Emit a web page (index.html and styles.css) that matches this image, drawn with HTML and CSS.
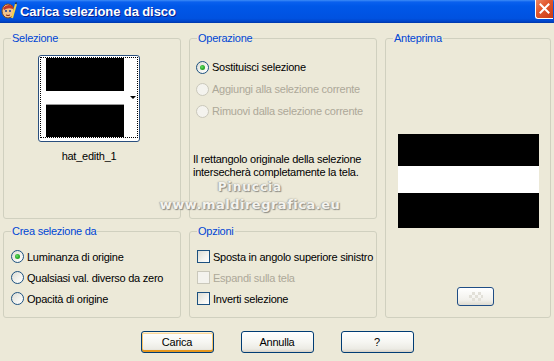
FILE: index.html
```html
<!DOCTYPE html>
<html>
<head>
<meta charset="utf-8">
<link rel="stylesheet" href="styles.css">
</head>
<body>
<div class="window">
  <div class="titlebar">
    <svg class="app-icon" width="16" height="17" viewBox="0 0 16 17">
      <ellipse cx="7" cy="9" rx="6" ry="7" fill="#f3c38a" stroke="#7a4a1c" stroke-width="1"/>
      <path d="M2 6 Q6 1 12 4 L12 7 Q7 5 3 8 Z" fill="#c0392b"/>
      <circle cx="5" cy="9" r="1" fill="#1a3f9a"/>
      <circle cx="9" cy="9" r="1" fill="#1a3f9a"/>
      <path d="M5 13 Q7 14 9 13" stroke="#7a1c1c" fill="none"/>
      <path d="M11 16 L15 2" stroke="#f2d24a" stroke-width="2"/>
      <path d="M14.5 2 L15.5 0.5" stroke="#333" stroke-width="1.5"/>
    </svg>
    <span class="title">Carica selezione da disco</span>
    <div class="close">
      <svg width="11" height="11" viewBox="0 0 11 11"><path d="M1.5 1.5 L9.5 9.5 M9.5 1.5 L1.5 9.5" stroke="#fff" stroke-width="2" stroke-linecap="square"/></svg>
    </div>
  </div>

  <div class="body">
    <div class="groups">
      <fieldset class="group g-sel">
        <legend>Selezione</legend>
        <div class="thumb">
          <div class="thumb-focus">
            <div class="thumb-img">
              <div class="band black b1"></div>
              <div class="band white b2"></div>
              <div class="band black b3"></div>
            </div>
            <span class="thumb-arrow"></span>
          </div>
        </div>
        <div class="thumb-caption">hat_edith_1</div>
      </fieldset>

      <fieldset class="group g-op">
        <legend>Operazione</legend>
        <div class="options op-list">
          <div class="row"><span class="radio checked"></span><span>Sostituisci selezione</span></div>
          <div class="row disabled"><span class="radio"></span><span>Aggiungi alla selezione corrente</span></div>
          <div class="row disabled"><span class="radio"></span><span>Rimuovi dalla selezione corrente</span></div>
        </div>
        <p class="note">Il rettangolo originale della selezione intersecherà completamente la tela.</p>
      </fieldset>

      <fieldset class="group g-prev">
        <legend>Anteprima</legend>
        <div class="preview">
          <div class="band black p1"></div>
          <div class="band white p2"></div>
          <div class="band black p3"></div>
        </div>
        <div class="mini-btn"><span class="checker"></span></div>
      </fieldset>

      <fieldset class="group g-crea">
        <legend>Crea selezione da</legend>
        <div class="options small-list">
          <div class="row"><span class="radio checked"></span><span>Luminanza di origine</span></div>
          <div class="row"><span class="radio"></span><span>Qualsiasi val. diverso da zero</span></div>
          <div class="row"><span class="radio"></span><span>Opacità di origine</span></div>
        </div>
      </fieldset>

      <fieldset class="group g-opt">
        <legend>Opzioni</legend>
        <div class="options small-list">
          <div class="row"><span class="check"></span><span>Sposta in angolo superiore sinistro</span></div>
          <div class="row disabled"><span class="check"></span><span>Espandi sulla tela</span></div>
          <div class="row"><span class="check"></span><span>Inverti selezione</span></div>
        </div>
      </fieldset>
    </div>

    <div class="buttons">
      <button class="btn default">Carica</button>
      <button class="btn">Annulla</button>
      <button class="btn">?</button>
    </div>

    <div class="watermark">
      <div class="wm1">Pinuccia</div>
      <div class="wm2">www.maldiregrafica.eu</div>
    </div>
  </div>
</div>
</body>
</html>
```

FILE: styles.css
```css
* { box-sizing: border-box; }
html, body { margin: 0; padding: 0; }
body {
  width: 554px;
  height: 361px;
  overflow: hidden;
  background: #ECE9D8;
  font-family: "Liberation Sans", Arial, sans-serif;
  font-size: 11px;
  letter-spacing: -0.25px;
  color: #000;
}
.window {
  position: relative;
  width: 554px;
  height: 361px;
  background: #ECE9D8;
}
.titlebar {
  height: 23px;
  display: flex;
  align-items: center;
  padding-left: 1px;
  background: linear-gradient(#3D8CF7 0, #0A60EE 2px, #0058E8 6px, #0055E5 50%, #0052E0 80%, #0046CC 92%, #0036A8 100%);
}
.app-icon { flex: none; margin-top: -2px; }
.title {
  margin-left: 3px;
  color: #fff;
  font-family: "Liberation Sans", Arial, sans-serif;
  font-weight: bold;
  font-size: 13px;
  letter-spacing: -0.1px;
  text-shadow: 1px 1px 0 #0A1E8C;
}
.close {
  margin-left: auto;
  margin-right: 1px;
  align-self: flex-start;
  margin-top: -3px;
  width: 18px;
  height: 22px;
  border: 1px solid #fff;
  border-top: none;
  border-right: none;
  border-radius: 0 0 0 3px;
  background: linear-gradient(135deg, #F09070 0%, #E2582E 45%, #C93A14 100%);
  display: flex;
  align-items: center;
  justify-content: center;
  padding-top: 2px;
}

.body {
  padding: 9px 0 0 3px;
}
.groups {
  display: grid;
  grid-template-columns: 178px 188px 166px;
  grid-template-rows: 187px 93px;
  column-gap: 8px;
  row-gap: 6px;
}
.group {
  margin: 0;
  padding: 0;
  border: 1px solid #D0D0BF;
  border-radius: 3px;
  min-width: 0;
}
.group legend {
  margin-left: 7px;
  padding: 0 1px;
  color: #0046D5;
  line-height: 13px;
  font-size: 11px;
}
.g-sel { grid-column: 1; grid-row: 1; }
.g-op { grid-column: 2; grid-row: 1; }
.g-prev { grid-column: 3; grid-row: 1 / span 2; }
.g-crea { grid-column: 1; grid-row: 2; }
.g-opt { grid-column: 2; grid-row: 2; }

/* Selezione thumbnail */
.thumb {
  margin: 10px 0 0 34px;
  width: 102px;
  height: 87px;
  border: 1px solid #2A4F7E;
  border-radius: 3px;
  background: #fff;
  padding: 1px;
}
.thumb-focus {
  position: relative;
  height: 81px;
  border: 1px dotted #000;
  padding: 0 0 0 5px;
}
.thumb-img {
  width: 78px;
  height: 79px;
  display: flex;
  flex-direction: column;
}
.band { flex: none; }
.black { background: #000; }
.white { background: #fff; }
.b1 { height: 33px; }
.b2 { height: 14px; background: #fff; border-bottom: 1px solid #9a9a9a; }
.b3 { height: 32px; }
.thumb-arrow {
  position: absolute;
  right: 1px;
  top: 38px;
  width: 0;
  height: 0;
  border-left: 3px solid transparent;
  border-right: 3px solid transparent;
  border-top: 3px solid #000;
}
.thumb-caption {
  width: 102px;
  margin: 8px 0 0 34px;
  text-align: center;
  line-height: 13px;
}

/* option lists */
.options { display: flex; flex-direction: column; }
.row {
  display: flex;
  align-items: center;
  gap: 3px;
  white-space: nowrap;
}
.op-list { margin: 11px 0 0 6px; }
.op-list .row { height: 22px; }
.small-list { margin: 8px 0 0 7px; }
.small-list .row { height: 21px; }
.row.disabled { color: #ACA899; }

.radio {
  position: relative;
  flex: none;
  width: 13px;
  height: 13px;
  border-radius: 50%;
  border: 1px solid #1C5180;
  background: linear-gradient(135deg, #DCDCD4 0%, #F4F4F0 60%, #FFFFFF 100%);
}
.radio.checked::after {
  content: "";
  position: absolute;
  left: 3px;
  top: 3px;
  width: 5px;
  height: 5px;
  border-radius: 50%;
  background: radial-gradient(circle at 40% 40%, #6BE36B 0, #2FB02F 45%, #1C8F1C 100%);
}
.disabled .radio, .disabled .check {
  border-color: #CAC8BB;
  background: #F4F3EE;
}
.check {
  flex: none;
  width: 13px;
  height: 13px;
  border: 1px solid #1C5180;
  background: linear-gradient(135deg, #DCDCD4 0%, #F4F4F0 60%, #FFFFFF 100%);
}

.note {
  margin: 31px 0 0 3px;
  line-height: 13px;
  width: 178px;
}

/* preview */
.preview {
  margin: 89px auto 0;
  width: 141px;
  height: 94px;
  display: flex;
  flex-direction: column;
}
.p1 { height: 32px; }
.p2 { height: 27px; }
.p3 { height: 35px; }
.mini-btn {
  margin: 59px 0 0 71px;
  width: 37px;
  height: 19px;
  border: 1px solid #1F4D85;
  border-radius: 3px;
  background: linear-gradient(#FFFFFF, #F2F1EC 70%, #DEDBD0);
  display: flex;
  align-items: center;
  justify-content: center;
}
.checker {
  width: 14px;
  height: 9px;
  background:
    linear-gradient(45deg, #E2E0D8 25%, transparent 25%, transparent 75%, #E2E0D8 75%),
    linear-gradient(45deg, #E2E0D8 25%, transparent 25%, transparent 75%, #E2E0D8 75%);
  background-size: 6px 6px;
  background-position: 0 0, 3px 3px;
}

/* bottom buttons */
.buttons {
  display: flex;
  justify-content: center;
  gap: 27px;
  margin-top: 13px;
  padding-right: 3px;
}
.btn {
  width: 73px;
  height: 22px;
  padding: 0;
  border: 1px solid #003C74;
  border-radius: 3px;
  background: linear-gradient(#FFFFFF 0%, #F6F6F2 50%, #ECEBE4 85%, #D6D0C5 100%);
  font-family: "Liberation Sans", Arial, sans-serif;
  font-size: 11px;
  letter-spacing: -0.25px;
  color: #000;
}
.btn.default {
  box-shadow: inset 0 1px 0 #FFF0CF, inset 0 -2px 0 #E5971F, inset 1px 0 0 #F9C56A, inset -1px 0 0 #F9C56A, inset 0 2px 0 #FBD79A;
}

/* watermark overlay */
.watermark {
  position: absolute;
  left: 140px;
  top: 178px;
  width: 220px;
  text-align: center;
  font-family: "DejaVu Sans", sans-serif;
  font-weight: bold;
  color: #F4F3EE;
  text-shadow: 1px 1px 1px #8E8D86, -1px 0 1px #B4B3AA, 0 0 2px #A8A79E;
  pointer-events: none;
}
.wm1 { font-size: 12px; line-height: 18px; letter-spacing: 1px; }
.wm2 { font-size: 13px; line-height: 18px; letter-spacing: 0.5px; }
```
